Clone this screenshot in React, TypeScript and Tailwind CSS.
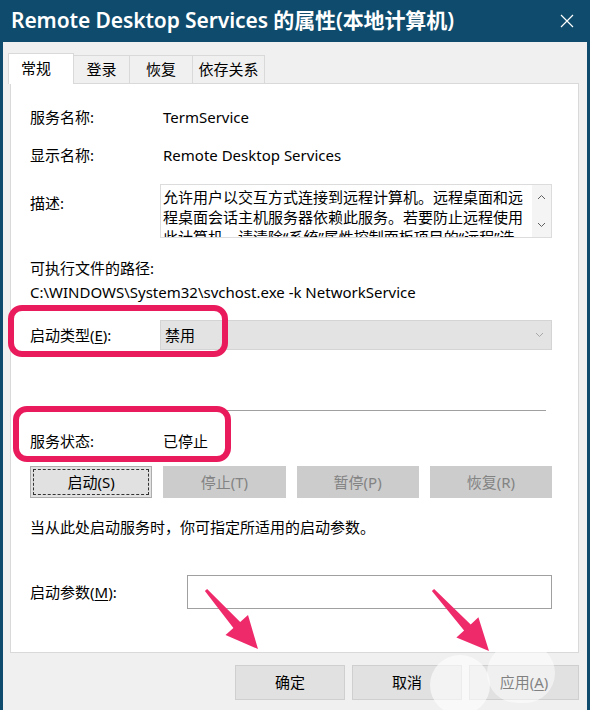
import React from 'react';

const Row = ({ label, value, className = '' }: { label: React.ReactNode; value?: React.ReactNode; className?: string }) => (
  <div className={`flex h-[20px] items-center leading-[20px] ${className}`}>
    <div className="w-[133px] shrink-0">{label}</div>
    <div className="whitespace-nowrap">{value}</div>
  </div>
);

const Chevron = ({ up = false, color = '#606060' }: { up?: boolean; color?: string }) => (
  <svg width="9" height="6" viewBox="0 0 9 6" fill="none">
    <path d={up ? 'M1 5 L4.5 1.5 L8 5' : 'M1 1 L4.5 4.5 L8 1'} stroke={color} strokeWidth="1" />
  </svg>
);

const App: React.FC = () => {
  const descLines = [
    '允许用户以交互方式连接到远程计算机。远程桌面和远',
    '程桌面会话主机服务器依赖此服务。若要防止远程使用',
    '此计算机，请清除“系统”属性控制面板项目的“远程”选',
  ];

  return (
    <div className="relative flex h-[710px] w-[590px] flex-col overflow-hidden bg-[#0e4b6c] font-['Noto_Sans','Noto_Sans_CJK_SC',sans-serif] text-[15px] text-black">
      {/* Title bar */}
      <div className="flex h-[42px] shrink-0 items-center justify-between pl-[11px] pr-[16px] text-white">
        <span className="whitespace-nowrap text-[21px] font-semibold tracking-[-0.1px]">Remote Desktop Services 的属性(本地计算机)</span>
        <svg width="14" height="14" viewBox="0 0 14 14">
          <path d="M1 1 L13 13 M13 1 L1 13" stroke="white" strokeWidth="1.2" />
        </svg>
      </div>

      {/* Body */}
      <div className="mx-[3px] flex flex-1 flex-col bg-[#f0f0f0]">
        {/* Tabs */}
        <div className="relative z-10 ml-[5px] mt-[11px] flex h-[31px] items-end">
          <div className="flex h-[31px] w-[66px] items-start border-l border-r border-t border-[#d9d9d9] bg-white pl-[12px] pt-[3px]">常规</div>
          <div className="mb-px flex h-[28px] w-[56px] items-center justify-center border-r border-t border-[#d9d9d9]">登录</div>
          <div className="mb-px flex h-[28px] w-[63px] items-center justify-center border-r border-t border-[#d9d9d9]">恢复</div>
          <div className="mb-px flex h-[28px] w-[72px] items-center justify-center border-r border-t border-[#d9d9d9]">依存关系</div>
        </div>

        {/* Panel */}
        <div className="-mt-px ml-[7px] flex h-[570px] w-[569px] flex-col border border-[#d9d9d9] bg-white pl-[19px] pr-[26px] pt-[23px]">
          <Row label="服务名称:" value="TermService" />
          <Row label="显示名称:" value="Remote Desktop Services" className="mt-[18px]" />

          <div className="mt-[19px] flex h-[54px]">
            <div className="w-[130px] shrink-0 pt-[9px] leading-[20px]">描述:</div>
            <div className="flex flex-1 overflow-hidden border border-[#dcdcdc]">
              <div className="flex-1 overflow-hidden pl-[2px] pt-[2px] leading-[20px]">
                {descLines.map((l) => (
                  <div key={l} className="whitespace-nowrap">{l}</div>
                ))}
              </div>
              <div className="flex w-[19px] flex-col items-center justify-between bg-[#f4f4f4] py-[9px]">
                <Chevron up />
                <Chevron />
              </div>
            </div>
          </div>

          <div className="mt-[20px] h-[20px] leading-[20px]">可执行文件的路径:</div>
          <div className="mt-[4px] h-[20px] whitespace-nowrap leading-[20px]">C:\WINDOWS\System32\svchost.exe -k NetworkService</div>

          <div className="mt-[18px] flex h-[30px] items-center">
            <div className="w-[130px] shrink-0">
              启动类型(<span className="underline underline-offset-2">E</span>):
            </div>
            <div className="flex h-[30px] flex-1 items-center justify-between border border-[#d4d4d4] bg-[#e3e3e3] pl-[4px] pr-[7px]">
              <span>禁用</span>
              <Chevron color="#a8a8a8" />
            </div>
          </div>

          <div className="mt-[60px] h-px bg-[#a0a0a0] ml-[2px] mr-[6px]" />

          <Row label="服务状态:" value="已停止" className="mt-[20px]" />

          <div className="mt-[15px] grid h-[32px] grid-cols-4 gap-[11px]">
            <div className="flex items-center justify-center border border-[#adadad] bg-[#e1e1e1] outline-1 outline-dashed outline-[#333] -outline-offset-4">启动(S)</div>
            <div className="flex items-center justify-center bg-[#cccccc] text-[#838383]">停止(T)</div>
            <div className="flex items-center justify-center bg-[#cccccc] text-[#838383]">暂停(P)</div>
            <div className="flex items-center justify-center bg-[#cccccc] text-[#838383]">恢复(R)</div>
          </div>

          <div className="mt-[19px] h-[20px] whitespace-nowrap leading-[20px]">当从此处启动服务时，你可指定所适用的启动参数。</div>

          <div className="mt-[38px] flex h-[34px] items-center">
            <div className="w-[157px] shrink-0">
              启动参数(<span className="underline underline-offset-2">M</span>):
            </div>
            <div className="h-[34px] flex-1 border border-[#a0a0a0] bg-white" />
          </div>
        </div>

        {/* Bottom buttons */}
        <div className="mt-[12px] flex justify-end gap-[7px] pr-[8px]">
          <div className="flex h-[35px] w-[110px] items-center justify-center border border-[#cfcfcf] bg-[#e1e1e1]">确定</div>
          <div className="flex h-[35px] w-[110px] items-center justify-center border border-[#cfcfcf] bg-[#e1e1e1]">取消</div>
          <div className="flex h-[35px] w-[110px] items-center justify-center border border-[#cfcfcf] bg-[#e1e1e1]">
            应用(<span className="underline underline-offset-2">A</span>)
          </div>
        </div>
      </div>

      {/* Highlight boxes */}
      <div className="pointer-events-none absolute left-[8px] top-[305px] h-[52px] w-[220px] rounded-[14px] border-[6px] border-[#ea1b5c]" />
      <div className="pointer-events-none absolute left-[13px] top-[406px] h-[56px] w-[218px] rounded-[14px] border-[6px] border-[#ea1b5c]" />

      {/* Watermark blobs */}
      <div className="pointer-events-none absolute left-[430px] top-[655px] h-[60px] w-[60px] rounded-full bg-white/60" />
      <div className="pointer-events-none absolute left-[487px] top-[643px] h-[60px] w-[68px] rounded-full bg-white/50" />

      {/* Arrows */}
      <svg className="pointer-events-none absolute left-0 top-0" width="590" height="710" viewBox="0 0 590 710">
        <polygon
          points="204.9,591 233.4,628 225.5,635 258,649 248,615 240.2,622 207.1,589"
          fill="#ef2a6b"
        />
        <polygon
          points="431.9,591 464.1,630.4 456.4,637.5 489,651 478.4,617.3 470.7,624.4 434.1,589"
          fill="#ef2a6b"
        />
      </svg>
    </div>
  );
};

export default App;
